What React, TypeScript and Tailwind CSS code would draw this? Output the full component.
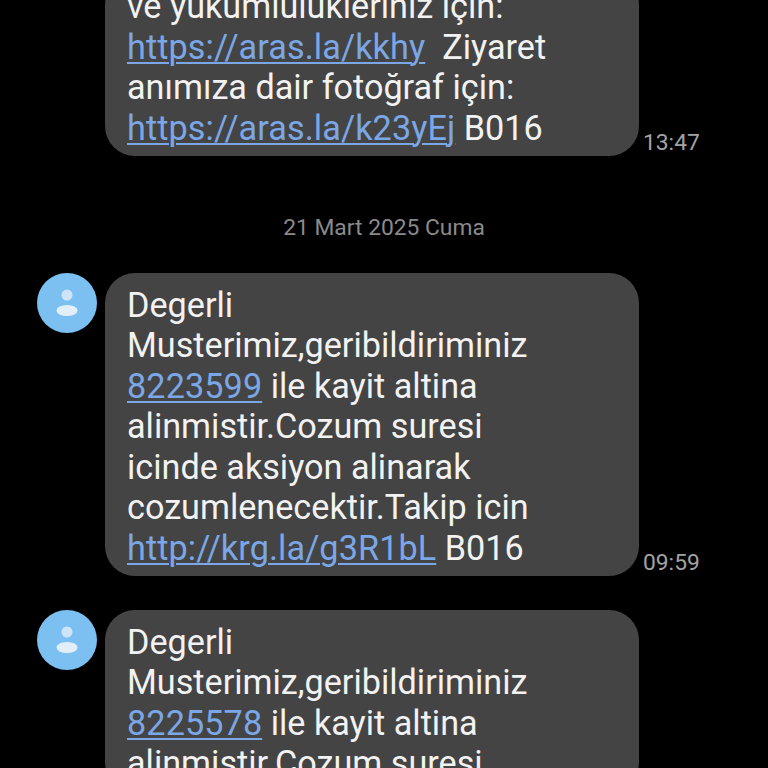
import React from "react";

type Part = { text: string; link?: boolean };

const Link = ({ children }: { children: React.ReactNode }) => (
  <span className="text-[#7ba7e6] tracking-[0.1px] underline decoration-[2px] underline-offset-[3px]">{children}</span>
);

const Avatar = () => (
  <div className="w-[60px] h-[60px] rounded-full bg-[#7cc0f2] flex items-center justify-center shrink-0">
    <svg width="24" height="32" viewBox="0 0 24 32">
      <circle cx="12" cy="8" r="5.5" fill="#cfe5f7" />
      <ellipse cx="12" cy="23.5" rx="10.5" ry="5.5" fill="#e2eefa" />
    </svg>
  </div>
);

const Bubble = ({ lines, time, avatar, className }: { lines: Part[][]; time?: string; avatar?: boolean; className?: string }) => (
  <div className={`flex items-start pl-[37px] ${className ?? ""}`}>
    <div className="w-[68px] shrink-0">{avatar && <Avatar />}</div>
    <div className="w-[534px] shrink-0 bg-[#444444] rounded-[30px] pl-[22px] pt-[11.5px] pb-[8px] text-[34.2px] leading-[40.5px] text-[#f2f2f2]">
      {lines.map((line, i) => (
        <div key={i} className="whitespace-pre">
          {line.map((p, j) => (p.link ? <Link key={j}>{p.text}</Link> : <span key={j}>{p.text}</span>))}
        </div>
      ))}
    </div>
    {time && <div className="self-end ml-[4px] -mb-[1px] text-[22.8px] leading-[28px] text-[#a3a3a3]">{time}</div>}
  </div>
);

const App = () => {
  return (
    <div className="w-[768px] h-[768px] overflow-hidden bg-black font-['Roboto',sans-serif]">
      <Bubble
        className="-mt-[25.5px]"
        time="13:47"
        lines={[
          [{ text: "ve yükümlülükleriniz için:" }],
          [{ text: "https://aras.la/kkhy", link: true }, { text: "  Ziyaret" }],
          [{ text: "anımıza dair fotoğraf için:" }],
          [{ text: "https://aras.la/k23yEj", link: true }, { text: " B016" }],
        ]}
      />
      <div className="text-center text-[22.8px] leading-[28px] text-[#8a8a8a] mt-[58px] mb-[31px]">21 Mart 2025 Cuma</div>
      <Bubble
        avatar
        time="09:59"
        lines={[
          [{ text: "Degerli" }],
          [{ text: "Musterimiz,geribildiriminiz" }],
          [{ text: "8223599", link: true }, { text: " ile kayit altina" }],
          [{ text: "alinmistir.Cozum suresi" }],
          [{ text: "icinde aksiyon alinarak" }],
          [{ text: "cozumlenecektir.Takip icin" }],
          [{ text: "http://krg.la/g3R1bL", link: true }, { text: " B016" }],
        ]}
      />
      <Bubble
        avatar
        className="mt-[34px]"
        lines={[
          [{ text: "Degerli" }],
          [{ text: "Musterimiz,geribildiriminiz" }],
          [{ text: "8225578", link: true }, { text: " ile kayit altina" }],
          [{ text: "alinmistir.Cozum suresi" }],
        ]}
      />
    </div>
  );
};

export default App;
